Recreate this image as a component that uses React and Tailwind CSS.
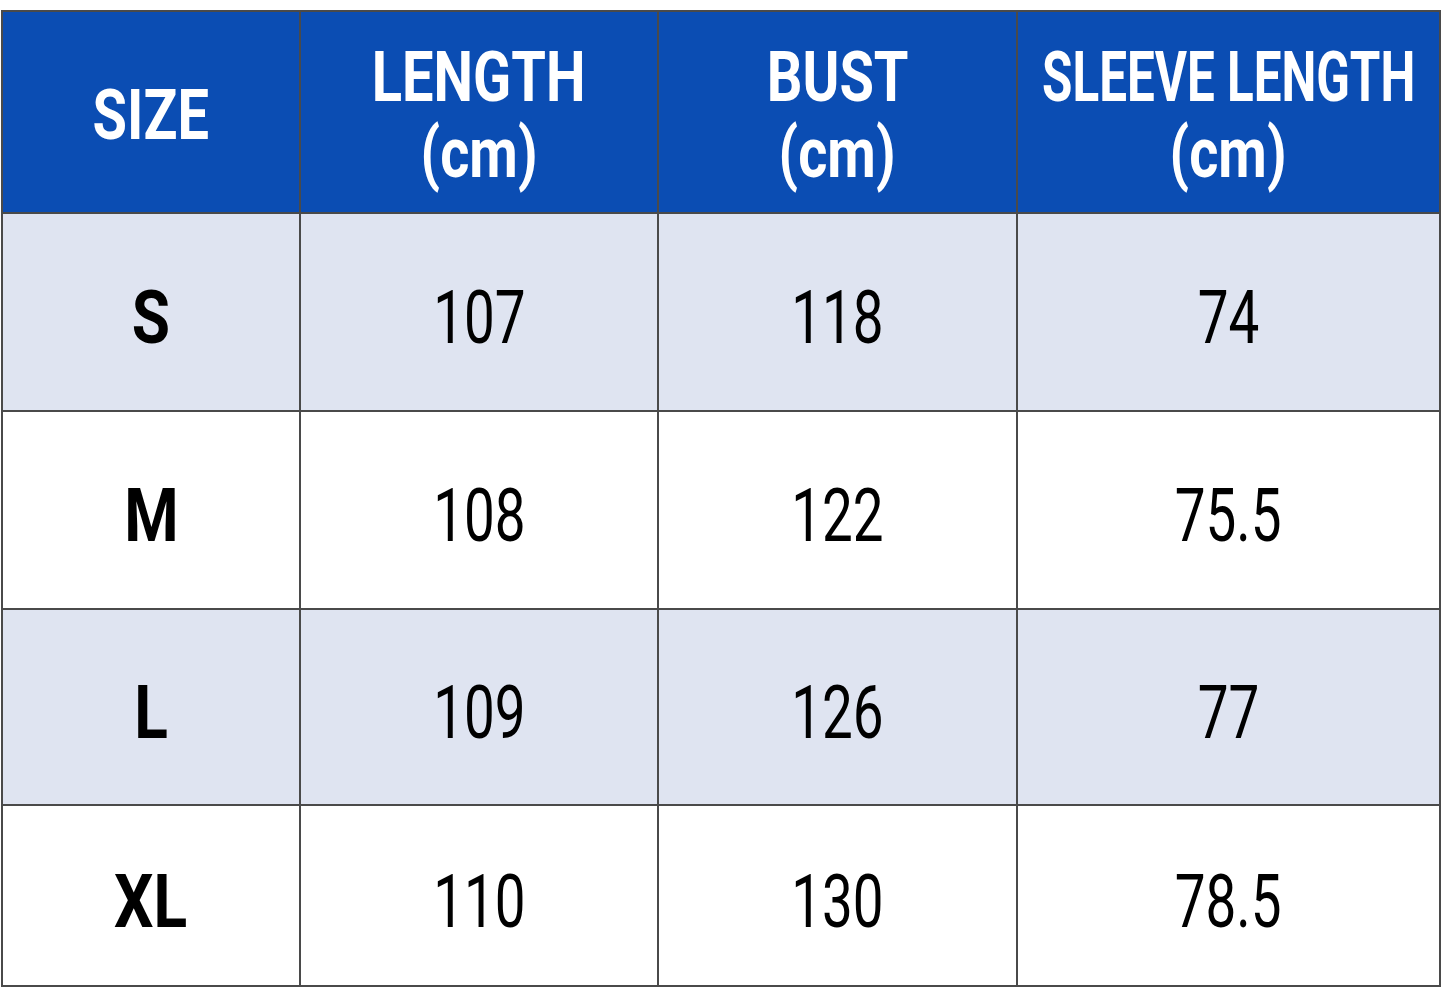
const headers = [
  [["SIZE", "scale-x-[0.8]"]],
  [["LENGTH", "scale-x-[0.8]"], ["(cm)", "scale-x-[0.8]"]],
  [["BUST", "scale-x-[0.8]"], ["(cm)", "scale-x-[0.8]"]],
  [["SLEEVE LENGTH", "scale-x-[0.705]"], ["(cm)", "scale-x-[0.8]"]],
];

const rows = [
  { size: "S", values: ["107", "118", "74"], bg: "bg-[#dfe4f1]", h: "h-[196px]" },
  { size: "M", values: ["108", "122", "75.5"], bg: "bg-white", h: "h-[196px]" },
  { size: "L", values: ["109", "126", "77"], bg: "bg-[#dfe4f1]", h: "h-[194px]" },
  { size: "XL", values: ["110", "130", "78.5"], bg: "bg-white", h: "h-[179px]" },
];

const font = { fontFamily: "Roboto, 'Liberation Sans', sans-serif" };

export default function App() {
  return (
    <div className="w-[1445px] h-[990px] bg-white pt-[10px] pl-px overflow-hidden" style={font}>
      <div className="w-[1440px] grid grid-cols-[296px_356px_357px_minmax(0,1fr)] gap-[2px] bg-[#4a4a4a] border-2 border-[#4a4a4a]">
        {/* Header */}
        {headers.map((lines, i) => (
          <div key={i} className="min-w-0 h-[200px] bg-[#0b4db3] flex flex-col items-center justify-center pt-[6px] text-white font-bold">
            {lines.map(([t, sc]) => (
              <span key={t} className={`inline-block ${sc} text-[70px] leading-[76px] whitespace-nowrap`}>
                {t}
              </span>
            ))}
          </div>
        ))}

        {/* Body rows */}
        {rows.map((r) => (
          <div key={r.size} className="contents">
            <div className={`${r.h} ${r.bg} min-w-0 flex items-center justify-center pt-[12px]`}>
              <span className="inline-block scale-x-[0.84] text-[74px] font-bold text-black leading-none">{r.size}</span>
            </div>
            {r.values.map((v, j) => (
              <div key={j} className={`${r.h} ${r.bg} min-w-0 flex items-center justify-center pt-[12px]`}>
                <span className="inline-block scale-x-[0.74] text-[74px] text-black leading-none">{v}</span>
              </div>
            ))}
          </div>
        ))}
      </div>
    </div>
  );
}
